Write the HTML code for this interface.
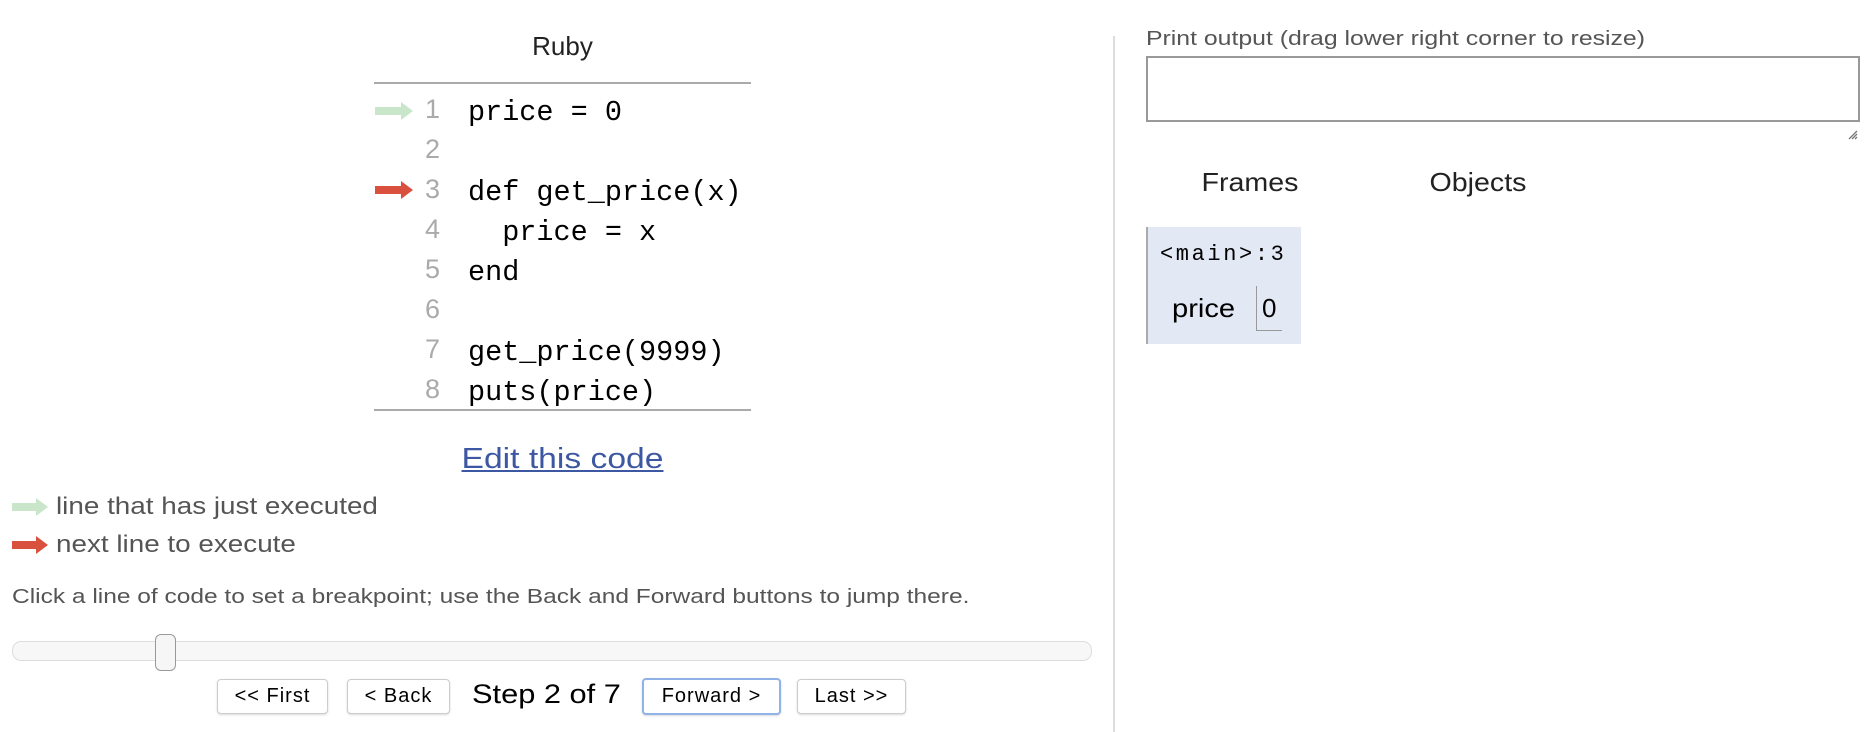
<!DOCTYPE html>
<html><head><meta charset="utf-8"><style>
body{margin:0;width:1876px;height:732px;background:#fff;position:relative;overflow:hidden;font-family:"Liberation Sans",sans-serif;color:#222}
.a{position:absolute;white-space:nowrap}
.sx{transform-origin:0 50%}
.code{font-family:"Liberation Mono",monospace;font-size:28.5px;color:#000}
.ln{font-family:"Liberation Sans",sans-serif;font-size:27px;color:#aaa;width:30px;text-align:right}
.btn{position:absolute;top:679px;height:33px;border:1px solid #ccc;border-radius:4px;background:#fff;box-shadow:0 1px 2px rgba(0,0,0,.15);font-size:20px;text-align:center;line-height:33px;color:#000;letter-spacing:1px}
</style></head><body>
<div class="a" style="left:374px;width:377px;top:31px;text-align:center;font-size:26px">Ruby</div>
<div class="a" style="left:374px;width:377px;top:82px;border-top:2px solid #aaa"></div>
<div class="a" style="left:374px;width:377px;top:409px;border-top:2px solid #aaa"></div>
<svg class="a" style="left:375px;top:102px" width="38" height="18"><path d="M0 5h26V0l12 9-12 9v-5H0z" fill="#c9e6ca"/></svg>
<svg class="a" style="left:375px;top:181px" width="38" height="18"><path d="M0 5h26V0l12 9-12 9v-5H0z" fill="#d9503f"/></svg>
<div class="a ln" style="left:410px;top:94px">1</div>
<div class="a ln" style="left:410px;top:134px">2</div>
<div class="a ln" style="left:410px;top:174px">3</div>
<div class="a ln" style="left:410px;top:214px">4</div>
<div class="a ln" style="left:410px;top:254px">5</div>
<div class="a ln" style="left:410px;top:294px">6</div>
<div class="a ln" style="left:410px;top:334px">7</div>
<div class="a ln" style="left:410px;top:374px">8</div>
<div class="a code" style="left:468px;top:93px;line-height:40px">price = 0<br>&nbsp;<br>def get_price(x)<br>&nbsp;&nbsp;price = x<br>end<br>&nbsp;<br>get_price(9999)<br>puts(price)</div>
<div class="a" style="left:374px;width:377px;top:443px;text-align:center;font-size:29px;color:#3d58a2;text-decoration:underline;transform:scaleX(1.16)">Edit this code</div>
<svg class="a" style="left:12px;top:498px" width="36" height="18"><path d="M0 5h24V0l12 9-12 9v-5H0z" fill="#c9e6ca"/></svg>
<svg class="a" style="left:12px;top:536px" width="36" height="18"><path d="M0 5h24V0l12 9-12 9v-5H0z" fill="#d9503f"/></svg>
<div class="a sx" style="left:56px;top:493px;font-size:24px;color:#555;transform:scaleX(1.16)">line that has just executed</div>
<div class="a sx" style="left:56px;top:531px;font-size:24px;color:#555;transform:scaleX(1.16)">next line to execute</div>
<div class="a sx" style="left:12px;top:586px;font-size:20px;color:#555;transform:scaleX(1.225)">Click a line of code to set a breakpoint; use the Back and Forward buttons to jump there.</div>
<div class="a" style="left:12px;top:641px;width:1078px;height:18px;border:1px solid #ddd;border-radius:9px;background:#f7f7f7"></div>
<div class="a" style="left:155px;top:634px;width:19px;height:35px;border:1px solid #999;border-radius:6px;background:#f6f6f6"></div>
<div class="btn" style="left:217px;width:109px">&lt;&lt; First</div>
<div class="btn" style="left:347px;width:101px">&lt; Back</div>
<div class="a sx" style="left:472px;top:679px;font-size:27px;color:#000;transform:scaleX(1.14)">Step 2 of 7</div>
<div class="btn" style="left:642px;width:135px;border:2px solid #8fb3e8;top:678px">Forward &gt;</div>
<div class="btn" style="left:797px;width:107px">Last &gt;&gt;</div>
<div class="a" style="left:1113px;top:36px;width:2px;height:696px;background:#ddd"></div>
<div class="a sx" style="left:1146px;top:28px;font-size:20px;color:#555;transform:scaleX(1.24)">Print output (drag lower right corner to resize)</div>
<div class="a" style="left:1146px;top:56px;width:710px;height:62px;border:2px solid #999"></div>
<svg class="a" style="left:1848px;top:130px" width="10" height="10"><path d="M9 1L1 9M9 4L4 9M9 7L7 9" stroke="#777" stroke-width="1.3"/></svg>
<div class="a" style="left:1190px;width:120px;top:167px;text-align:center;font-size:26px;transform:scaleX(1.1)">Frames</div>
<div class="a" style="left:1418px;width:120px;top:167px;text-align:center;font-size:26px;transform:scaleX(1.1)">Objects</div>
<div class="a" style="left:1146px;top:227px;width:153px;height:117px;background:#e2e8f4;border-left:2px solid #aaa"></div>
<div class="a" style="left:1160px;top:242px;font-family:'Liberation Mono',monospace;font-size:22px;color:#000;letter-spacing:2.6px">&lt;main&gt;:3</div>
<div class="a sx" style="left:1172px;top:293px;font-size:26px;color:#000;transform:scaleX(1.12)">price</div>
<div class="a" style="left:1256px;top:286px;width:25px;height:44px;border-left:1px solid #999;border-bottom:1px solid #999"></div>
<div class="a" style="left:1262px;top:293px;font-size:26px;color:#000">0</div>
</body></html>
